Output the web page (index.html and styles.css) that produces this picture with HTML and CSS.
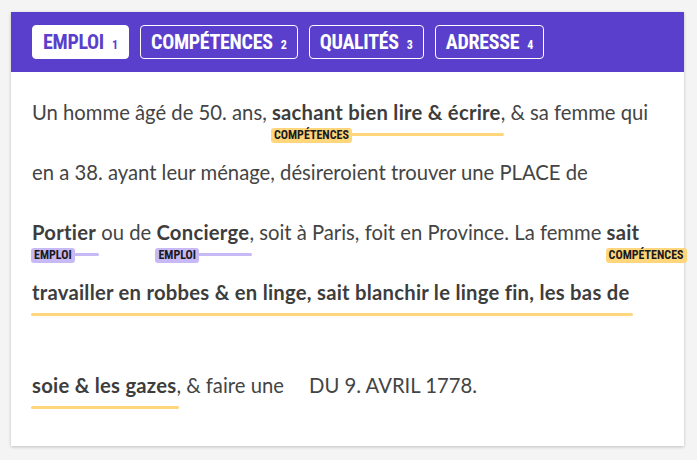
FILE: index.html
```html
<!DOCTYPE html>
<html lang="fr">
<head>
<meta charset="utf-8">
<link rel="stylesheet" href="styles.css">
</head>
<body>
<div class="card">
  <div class="header">
    <div class="tab active"><span class="tab-name">EMPLOI</span><span class="tab-num">1</span></div>
    <div class="tab"><span class="tab-name">COMPÉTENCES</span><span class="tab-num">2</span></div>
    <div class="tab"><span class="tab-name">QUALITÉS</span><span class="tab-num">3</span></div>
    <div class="tab"><span class="tab-name">ADRESSE</span><span class="tab-num">4</span></div>
  </div>
  <div class="content">
    <div class="row">Un homme âgé de 50. ans, <span class="mark comp"><b>sachant bien lire &amp; écrire</b><span class="label">COMPÉTENCES</span></span>, &amp; sa femme qui</div>
    <div class="row">en a 38. ayant leur ménage, désireroient trouver une PLACE de</div>
    <div class="row"><span class="mark emploi"><b>Portier</b><span class="label">EMPLOI</span></span> ou de <span class="mark emploi"><b>Concierge</b><span class="label">EMPLOI</span></span>, soit à Paris, foit en Province. La femme <span class="mark comp nobar"><b>sait</b><span class="label">COMPÉTENCES</span></span></div>
    <div class="row tall"><span class="mark comp"><b>travailler en robbes &amp; en linge, sait blanchir le linge fin, les bas de</b></span></div>
    <div class="row"><span class="mark comp"><b>soie &amp; les gazes</b></span>, &amp; faire une <span class="gap"></span>DU 9. AVRIL 1778.</div>
  </div>
</div>
</body>
</html>
```
FILE: styles.css
```css
html, body {
  margin: 0;
  padding: 0;
  background: #f4f4f4;
}
body {
  padding: 12px 13px 14px 11px;
}
.card {
  background: #fff;
  height: 434px;
  box-shadow: 0 1px 3px rgba(0,0,0,0.22);
}
.header {
  background: #5a3fcc;
  height: 60px;
  box-sizing: border-box;
  padding: 13px 0 0 21px;
  display: flex;
  gap: 11px;
  align-items: flex-start;
}
.tab {
  height: 34px;
  box-sizing: border-box;
  border: 1px solid #fff;
  border-radius: 4px;
  padding: 0 10px;
  display: flex;
  align-items: baseline;
  color: #fff;
  font-family: Roboto, "Liberation Sans", sans-serif;
  font-weight: 700;
  font-stretch: 80%;
  line-height: 32px;
}
.tab.active {
  background: #fff;
  color: #5a3fcc;
}
.tab-name {
  font-size: 20px;
  letter-spacing: -0.3px;
}
.tab-num {
  font-size: 12px;
  margin-left: 8px;
}
.content {
  padding: 25px 0 0 21px;
  font-family: Lato, "Open Sans", sans-serif;
  font-size: 20.25px;
  color: #444;
}
.row {
  height: 60px;
  line-height: 30px;
  white-space: nowrap;
}
.row.tall {
  height: 93px;
}
.row b {
  font-weight: 700;
  color: #3d3d3d;
  letter-spacing: 0.25px;
}
.mark {
  display: inline-block;
  position: relative;
}
.mark::after {
  content: "";
  position: absolute;
  left: -1px;
  right: -3px;
  top: 36px;
  height: 3px;
  border-radius: 2px;
}
.mark.nobar::after {
  display: none;
}
.comp::after { background: #ffd67c; }
.emploi::after { background: #c6b9f6; }
.label {
  position: absolute;
  z-index: 1;
  left: -1px;
  top: 31px;
  height: 15px;
  line-height: 15px;
  padding: 0 3px;
  border-radius: 3px;
  font-family: Roboto, "Liberation Sans", sans-serif;
  font-weight: 700;
  font-stretch: 80%;
  font-size: 12px;
  color: #1a1a1a;
}
.comp .label { background: #ffd67c; }
.emploi .label { background: #c6b9f6; }
.gap {
  display: inline-block;
  width: 20px;
}
```
